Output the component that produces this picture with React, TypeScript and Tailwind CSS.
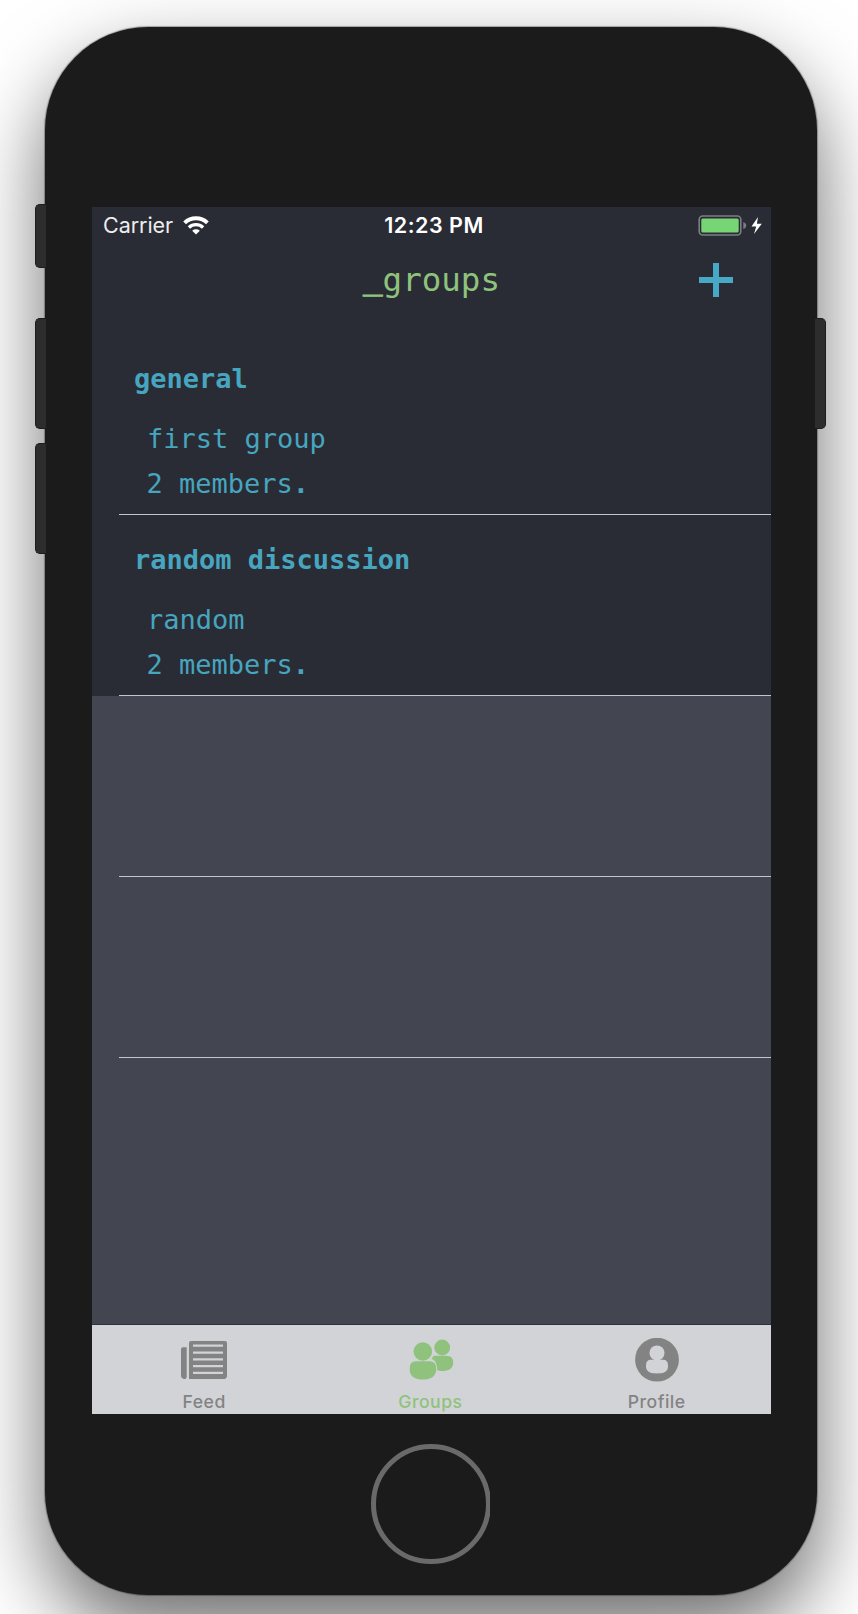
import React from "react";

const groups = [
  { name: "general", description: "first group", members: 2 },
  { name: "random discussion", description: "random", members: 2 },
];

function StatusBar() {
  return (
    <div className="flex h-[37px] items-center font-['Inter',sans-serif] text-[21.5px] leading-[37px] text-white">
      <div className="flex flex-1 items-center pl-[11px]">
        <span className="tracking-[-0.05px] text-[#eeeeef]">Carrier</span>
        <svg className="ml-[10px] h-[18px] w-[26px] overflow-visible" viewBox="0 0 26 18" fill="none">
          <path d="M13 17.500 9.200 13.700a5.600 5.600 0 0 1 7.600 0Z" fill="#fff" />
          <path d="M5.900 10.500a10.300 10.300 0 0 1 14.200 0" stroke="#fff" strokeWidth="3.300" />
          <path d="M1.600 5.900a16.600 16.600 0 0 1 22.800 0" stroke="#fff" strokeWidth="4" />
        </svg>
      </div>
      <span className="-mr-[2px] font-semibold tracking-[0.5px]">12:23 PM</span>
      <div className="flex flex-1 justify-end pr-[8px]">
        <svg className="h-[22px] w-[65px]" viewBox="0 0 65 22" fill="none">
          <rect x="1.200" y="1" width="41.600" height="19" rx="3.500" stroke="#7d7e84" strokeWidth="1.600" />
          <rect x="3.300" y="3.400" width="37.400" height="14.200" rx="1.500" fill="#78d576" />
          <path d="M45.300 7q3 1.200 3 3.500t-3 3.500Z" fill="#7d7e84" />
          <path d="M60 2 53.500 11.500h4.700L56 19 63.800 8.700h-4.900Z" fill="#fff" />
        </svg>
      </div>
    </div>
  );
}

function Header() {
  return (
    <div className="grid h-[90px] grid-cols-[1fr_auto_1fr] text-[#8fc27c]">
      <span />
      <h1 className="font-['DejaVu_Sans_Mono',monospace] text-[32.500px] leading-[73px]">
        <span className="relative -top-[2.5px] [-webkit-text-stroke:1px_#8fc27c]">_</span>groups
      </h1>
      <button className="mt-[19px] mr-[38px] h-[34px] w-[34px] justify-self-end" aria-label="Add group">
        <svg className="block h-[34px] w-[34px]" viewBox="0 0 34 34">
          <path d="M14 0h6v14h14v6H20v14h-6V20H0v-6h14Z" fill="#47a9c6" />
        </svg>
      </button>
    </div>
  );
}

function GroupRow({ name, description, members }: (typeof groups)[number]) {
  return (
    <li className="flex h-[181px] flex-col bg-[#292c34] pl-[27px]">
      <div className="flex flex-1 flex-col border-b border-[#c6c6ca] pt-[25px] font-['DejaVu_Sans_Mono',monospace] text-[27px] text-[#47a5bf]">
        <h2 className="pl-[15px] leading-[40px] font-bold">{name}</h2>
        <p className="mt-[17px] pl-[28px] leading-[45px]">{description}</p>
        <p className="pl-[27.5px] leading-[45px]">
          {members} members<b>.</b>
        </p>
      </div>
    </li>
  );
}

function FeedIcon() {
  return (
    <svg className="h-[44px] w-[46px]" viewBox="0 0 46 44" fill="#838383">
      <path d="M2 9.200h3.700V39.300L4.500 41H2.600Q0 40 0 38V11.200q0-2 2-2Z" />
      <path
        fillRule="evenodd"
        d="M10 3h34q2 0 2 2v34l-2 2H8V5q0-2 2-2Zm2 3.500v2.300h30V6.500Zm0 7v2.300h30v-2.300Zm0 6.700v2.300h30v-2.300Zm0 6.800v2.300h30v-2.300Zm0 6.700v2.300h30v-2.300Z"
      />
    </svg>
  );
}

function GroupsIcon() {
  return (
    <svg className="h-[44px] w-[44px] translate-x-[1.5px]" viewBox="0 0 44 44" fill="#8fc27c">
      <circle cx="32.700" cy="9.500" r="7.900" />
      <path d="M24 17.700h13q6.800 0 6.800 7c0 6-5 8.300-11 8.300-2 0-4-.3-5-.7C27.500 26 26 22 22 21Z" />
      <circle cx="13.300" cy="13.500" r="9.300" />
      <path d="M6.500 23.200h13.600q6.700 0 6.700 7.500c0 8-6 10.800-13.500 10.800S0 38.700 0 30.700q0-7.500 6.500-7.500Z" />
    </svg>
  );
}

function ProfileIcon() {
  return (
    <svg className="h-[44px] w-[44px]" viewBox="0 0 44 44">
      <circle cx="22" cy="21.700" r="21.900" fill="#838383" />
      <circle cx="22" cy="14.900" r="7.500" fill="#d2d3d7" />
      <path d="M16 21.700h12q5 0 5 5.500v1c0 5.700-4.500 7.200-11 7.200s-11-1.500-11-7.200v-1q0-5.500 5-5.500Z" fill="#d2d3d7" />
    </svg>
  );
}

function Tab({ label, active, children }: { label: string; active?: boolean; children: React.ReactNode }) {
  return (
    <button
      className={
        "flex w-[226.300px] flex-col items-center pt-[13px] font-['Inter',sans-serif] text-[17.600px] leading-[22px] font-medium tracking-[0.500px] " +
        (active ? "text-[#8fc27c]" : "text-[#838383]")
      }
    >
      {children}
      <span className="mt-[9px]">{label}</span>
    </button>
  );
}

export default function App() {
  return (
    <div className="flex h-[1614px] w-[858px] flex-col overflow-hidden bg-white pt-[27px] pl-[45px]">
      <div className="relative flex h-[1568px] w-[772px] shrink-0 flex-col rounded-[103px] bg-[#1b1b1b] pt-[180px] pl-[47px] shadow-[0_0_1px_1px_rgba(0,0,0,0.3),0_36px_80px_rgba(0,0,0,0.58)]">
        <i className="absolute top-[177px] -left-[10px] h-[64px] w-[11px] rounded-l-[5px] border border-r-0 border-[#1d1d1d] bg-[#2d2d2d]" />
        <i className="absolute top-[291px] -left-[10px] h-[111px] w-[11px] rounded-l-[5px] border border-r-0 border-[#1d1d1d] bg-[#2d2d2d]" />
        <i className="absolute top-[416px] -left-[10px] h-[111px] w-[11px] rounded-l-[5px] border border-r-0 border-[#1d1d1d] bg-[#2d2d2d]" />
        <i className="absolute top-[291px] -right-[9px] h-[111px] w-[11px] rounded-r-[5px] border border-l-0 border-[#1d1d1d] bg-[#2d2d2d]" />

        <main className="flex h-[1207px] w-[679px] flex-col bg-[#434550]">
          <div className="bg-[#292c34]">
            <StatusBar />
            <Header />
          </div>
          <ul className="flex-1">
            {groups.map((group) => (
              <GroupRow key={group.name} {...group} />
            ))}
            <li className="ml-[27px] h-[181px] border-b border-[#c6c6ca]" />
            <li className="ml-[27px] h-[181px] border-b border-[#c6c6ca]" />
          </ul>
          <nav className="flex h-[90px] border-t border-[#30323b] bg-[#d2d3d7] [&>button]:-translate-x-px">
            <Tab label="Feed">
              <FeedIcon />
            </Tab>
            <Tab label="Groups" active>
              <GroupsIcon />
            </Tab>
            <Tab label="Profile">
              <ProfileIcon />
            </Tab>
          </nav>
        </main>

        <div className="mt-[30px] ml-[279px] h-[120px] w-[119px] overflow-hidden">
          <div className="h-[120px] w-[120px] rounded-full border-[5px] border-[#6a6a6a]" />
        </div>
      </div>
    </div>
  );
}
